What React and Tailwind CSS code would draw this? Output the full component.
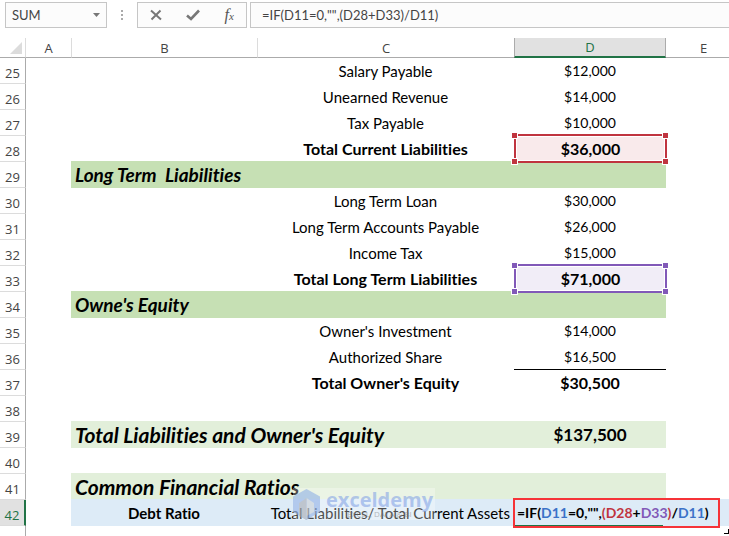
import React from "react";

const columns = [
	{ name: "A", style: "w-[45px] border-b-[#ababab]" },
	{ name: "B", style: "w-[186px] border-l border-l-[#dcdcdc] border-b-[#ababab]" },
	{ name: "C", style: "w-[257px] border-l border-l-[#dcdcdc] border-b-[#ababab]" },
	{ name: "D", style: "w-[152px] border-x border-b-2 border-x-[#ababab] border-b-[#217346] bg-[#e1e1e1] text-[#217346]" },
	{ name: "E", style: "border-b-[#ababab] pl-3" },
];

const rows = [
	{ id: 25, type: "item", label: "Salary Payable", amount: "$12,000" },
	{ id: 26, type: "item", label: "Unearned Revenue", amount: "$14,000" },
	{ id: 27, type: "item", label: "Tax Payable", amount: "$10,000" },
	{ id: 28, type: "total", label: "Total Current Liabilities", amount: "$36,000", range: "red" },
	{ id: 29, type: "section", label: "Long Term  Liabilities" },
	{ id: 30, type: "item", label: "Long Term Loan", amount: "$30,000" },
	{ id: 31, type: "item", label: "Long Term Accounts Payable", amount: "$26,000" },
	{ id: 32, type: "item", label: "Income Tax", amount: "$15,000" },
	{ id: 33, type: "total", label: "Total Long Term Liabilities", amount: "$71,000", range: "purple" },
	{ id: 34, type: "section", label: "Owne's Equity" },
	{ id: 35, type: "item", label: "Owner's Investment", amount: "$14,000" },
	{ id: 36, type: "item", label: "Authorized Share", amount: "$16,500", underline: true },
	{ id: 37, type: "total", label: "Total Owner's Equity", amount: "$30,500" },
	{ id: 38, type: "blank" },
	{ id: 39, type: "summary", label: "Total Liabilities and Owner's Equity", amount: "$137,500" },
	{ id: 40, type: "blank" },
	{ id: 41, type: "summary", label: "Common Financial Ratios" },
	{ id: 42, type: "ratio" },
];

const ranges = {
	red: { box: "border-[#c0343f] bg-[#f9eaeb]", handle: "bg-[#c0343f]" },
	purple: { box: "border-[#8159b8] bg-[#f1edf7]", handle: "bg-[#8159b8]" },
};

const corners = ["-left-[5px] -top-1", "-right-1 -top-1", "-left-[5px] -bottom-1", "-right-1 -bottom-1"];

const RangeBox = ({ color, children }) => (
	<div className={`absolute -top-[2px] -right-px -bottom-px left-0 z-10 flex items-center justify-center border-2 shadow-[inset_0_0_0_1px_#fff] ${ranges[color].box}`}>
		{children}
		{corners.map((corner) => (
			<span key={corner} className={`absolute size-[7px] border border-white ${corner} ${ranges[color].handle}`} />
		))}
	</div>
);

const FormulaBar = () => (
	<div className="flex h-[38px] items-start pt-[2px] pl-[5px] text-[#444]">
		<div className="flex h-[26px] w-[102px] shrink-0 items-center border border-[#c6c6c6] bg-[#fcfcfc]">
			<input aria-label="Name box" defaultValue="SUM" className="w-full min-w-0 bg-transparent pl-[6px] text-[13px] outline-none" />
			<button aria-label="Show names" className="flex h-full w-5 shrink-0 items-center justify-center">
				<svg width="7" height="4" viewBox="0 0 7 4" fill="#777"><path d="M0 0h7L3.500 4z" /></svg>
			</button>
		</div>
		<svg className="mx-[14px] mt-2 shrink-0" width="2" height="11" viewBox="0 0 2 11" fill="#aaa">
			<path d="M0 0h2v2H0zM0 4h2v2H0zM0 8h2v2H0z" />
		</svg>
		<div className="flex h-[26px] w-[110px] shrink-0 items-center justify-around border border-[#c6c6c6] bg-[#fcfcfc]">
			<button aria-label="Cancel">
				<svg width="12" height="12" viewBox="0 0 12 12" fill="none" stroke="#777" strokeWidth="2"><path d="M1 1.500l10 9M10.500 1.500L1.500 10.500" /></svg>
			</button>
			<button aria-label="Enter">
				<svg width="14" height="12" viewBox="0 0 14 12" fill="none" stroke="#777" strokeWidth="2.600"><path d="M1 6.500l4 3.500L13 1.500" /></svg>
			</button>
			<button aria-label="Insert function" className="flex items-baseline font-['Liberation_Serif',serif] text-[16px] leading-4 text-[#555] italic">
				f<span className="text-[11px]">x</span>
			</button>
		</div>
		<input
			aria-label="Formula bar"
			defaultValue={'=IF(D11=0,"",(D28+D33)/D11)'}
			className="ml-[3px] h-[26px] min-w-0 flex-1 border border-r-0 border-[#c6c6c6] bg-[#fcfcfc] pl-[11px] text-[13px] outline-none [font-kerning:none]"
		/>
	</div>
);

const Watermark = () => (
	<div className="pointer-events-none absolute top-[450px] left-[293px] z-20 flex h-[32px] w-[142px] items-center bg-white/30">
		<svg width="28" height="31" viewBox="0 0 28 31" className="shrink-0 opacity-60">
			<path d="M13.500 0L27 7.500v15.500L13.500 31 0 23V7.500z" fill="#8fb0e6" />
			<path d="M13.500 9L21 14v9l-7.500 4z" fill="#c9cfd6" />
			<path d="M13.500 9L6 14v13l7.500 4z" fill="#a3a9b3" />
		</svg>
		<div className="ml-[5px] flex flex-col items-center">
			<span className="font-['Open_Sans',sans-serif] text-[20px] leading-[20px] font-bold text-[#86a5e6]/60">exceldemy</span>
			<span className="font-['Open_Sans',sans-serif] text-[8px] leading-[8px] text-[#777]/50">EXCEL, DATA & BI</span>
		</div>
	</div>
);

const EditedFormula = () => (
	<div className="absolute -top-[2px] -left-px z-10 flex h-[30px] w-[207px] items-center border-2 border-[#f63338] bg-[#ddebf7] pl-[2px] text-[14px] font-bold whitespace-nowrap [font-kerning:none]">
		<span>=IF(</span>
		<span className="text-[#3b72c8]">D11</span>
		<span>=0,"",</span>
		<span className="text-[#c0343f]">(D28</span>
		<span>+</span>
		<span className="text-[#8159b8]">D33</span>
		<span className="text-[#c0343f]">)</span>
		<span>/</span>
		<span className="text-[#3b72c8]">D11</span>
		<span>)</span>
		<span className="absolute bottom-0 left-0 h-px w-[148px] bg-[#217346]" />
	</div>
);

const Cells = ({ row }) => {
	if (row.type === "blank") {
		return <td colSpan={4} />;
	}
	if (row.type === "section") {
		return (
			<>
				<td colSpan={3} className="bg-[#c6e0b4] pl-1 text-[19px] font-bold whitespace-pre italic shadow-[0_-1px_0_#c6e0b4]">{row.label}</td>
				<td />
			</>
		);
	}
	if (row.type === "summary") {
		return (
			<>
				<td colSpan={2} className="bg-[#e2efda] pl-1 text-[21px] font-bold whitespace-nowrap italic shadow-[0_-1px_0_#e2efda]">{row.label}</td>
				<td className="bg-[#e2efda] text-center text-[17px] font-bold shadow-[0_-1px_0_#e2efda]">{row.amount}</td>
				<td />
			</>
		);
	}
	if (row.type === "ratio") {
		return (
			<>
				<td className="bg-[#ddebf7] text-center text-[15px] font-bold shadow-[0_-1px_0_#ddebf7]">Debt Ratio</td>
				<td className="bg-[#ddebf7] pr-1 text-right text-[15px] whitespace-nowrap shadow-[0_-1px_0_#ddebf7]">Total Liabilities/ Total Current Assets</td>
				<td className="relative bg-[#ddebf7]"><EditedFormula /></td>
				<td className="bg-[#ddebf7] shadow-[0_-1px_0_#ddebf7]" />
			</>
		);
	}
	const isTotal = row.type === "total";
	return (
		<>
			<td />
			<td className={`text-center ${isTotal ? "text-[16px] font-bold" : "text-[15px]"}`}>{row.label}</td>
			<td className={`relative text-center ${isTotal ? "text-[16px] font-bold" : "text-[14px]"} ${row.underline ? "shadow-[inset_0_-1px_0_#000]" : ""}`}>
				{row.range ? <RangeBox color={row.range}>{row.amount}</RangeBox> : row.amount}
			</td>
			<td />
		</>
	);
};

export default function App() {
	return (
		<div className="flex h-screen flex-col overflow-hidden bg-white font-['Lato',sans-serif] text-[14px] leading-5 text-black [font-variant-ligatures:none]">
			<FormulaBar />
			<div className="relative">
				<table className="w-full table-fixed border-separate border-spacing-0">
					<thead>
						<tr className="h-[19px] font-['Open_Sans',sans-serif] text-[13px] leading-[18px] text-[#444]">
							<th aria-label="Select all" className="w-[26px] border-r border-b border-r-[#dcdcdc] border-b-[#ababab]">
								<svg className="ml-[10px]" width="12" height="12" viewBox="0 0 12 12" fill="#dcdcdc"><path d="M12 0v12H0z" /></svg>
							</th>
							{columns.map((col) => (
								<th key={col.name} className={`border-b font-normal ${col.style}`}>
									{col.name}
								</th>
							))}
						</tr>
					</thead>
					<tbody>
						{rows.map((row) => (
							<tr key={row.id} className="h-[26px]">
								<th
									className={`border-r border-b border-b-[#dcdcdc] pt-[6px] font-['Open_Sans',sans-serif] text-[13px] leading-[19px] font-normal ${row.id === 42 ? "border-r-2 border-r-[#217346] bg-[#e1e1e1] text-[#217346]" : "border-r-[#ababab] text-[#444]"}`}
								>
									{row.id}
								</th>
								<td />
								<Cells row={row} />
							</tr>
						))}
					</tbody>
				</table>
				<Watermark />
			</div>
			<div className="flex flex-1 items-center justify-end">
				<div className="w-[26px] self-stretch border-r border-[#ababab]" />
				<div className="flex-1" />
				<span className="size-[5px] border-r border-b border-black" />
			</div>
		</div>
	);
}
